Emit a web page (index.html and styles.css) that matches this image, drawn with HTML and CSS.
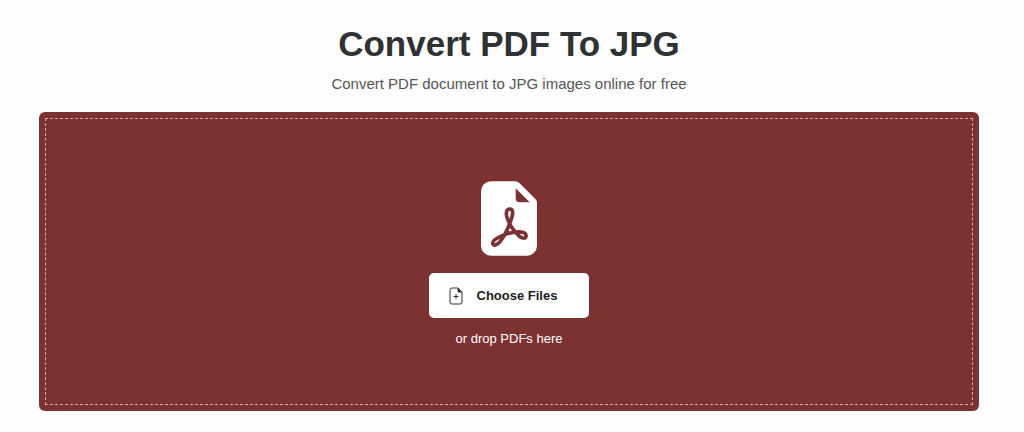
FILE: index.html
```html
<!DOCTYPE html>
<html lang="en">
<head>
  <meta charset="UTF-8" />
  <meta name="viewport" content="width=device-width, initial-scale=1.0" />
  <title>Convert PDF To JPG</title>
  <link rel="stylesheet" href="styles.css">
</head>
<body>
  <header class="header">
    <h1>Convert PDF To JPG</h1>
    <p>Convert PDF document to JPG images online for free</p>
  </header>

  <main class="uploader">
    <div class="drop-zone">
      <svg class="pdf-icon" viewBox="0 0 168 223" aria-hidden="true">
        <path fill="#fff" d="M30 0H103Q110 0 115 5L163 53Q168 58 168 65V193A30 30 0 0 1 138 223H30A30 30 0 0 1 0 193V30A30 30 0 0 1 30 0Z" />
        <path fill="#7d3232" d="M104 21L146 63H116Q104 63 104 51Z" />
        <path fill="none" stroke="#7d3232" stroke-width="11" stroke-linejoin="round" d="M86 83C75 83 74 98 79 111C84 128 98 148 113 163C123 173 136 174 135 162C134 149 103 149 76 158C55 166 34 176 35 185C36 196 48 192 58 180C73 162 88 126 93 106C97 92 95 83 86 83Z" />
      </svg>

      <button type="button" class="choose-btn">
        <svg class="file-icon" viewBox="0 0 14 18" aria-hidden="true">
          <path fill="none" stroke="#333" d="M3 1H9L13 5V15Q13 17 11 17H3Q1 17 1 15V3Q1 1 3 1ZM7 7V12M4.500 9.500H9.500" />
          <path fill="#222" d="M8.500 1L13 5.500H10Q8.500 5.500 8.500 4Z" />
        </svg>
        <span>Choose Files</span>
      </button>

      <p class="hint">or drop PDFs here</p>
    </div>
  </main>
</body>
</html>
```
FILE: styles.css
```css
body {
  font-family: "Liberation Sans", Arial, sans-serif;
  margin: 0;
  padding: 24px 45px 20px 39px;
  background: #fefefe;
}

.header {
  text-align: center;
  margin-bottom: 18px;
}

h1 {
  margin: 0 0 10px;
  font-size: 35px;
  line-height: 40px;
  color: #2f3233;
}

p {
  margin: 0;
}

.header p {
  font-size: 15px;
  line-height: 20px;
  color: #555;
}

.uploader {
  padding: 6px;
  background: #7d3232;
  border-radius: 6px;
}

.drop-zone {
  display: flex;
  flex-direction: column;
  align-items: center;
  padding: 62px 16px 55px;
  border: 1px dashed #d9aaa5;
}

.pdf-icon {
  width: 56px;
  height: 75px;
  margin-bottom: 17px;
}

.choose-btn {
  display: flex;
  align-items: center;
  gap: 14px;
  height: 45px;
  padding: 0 32px 0 20px;
  border: 0;
  border-radius: 5px;
  background: #fff;
  color: #222;
  font-family: inherit;
  font-size: 13px;
  font-weight: bold;
  cursor: pointer;
}

.file-icon {
  width: 14px;
  height: 18px;
}

.hint {
  margin-top: 11px;
  font-size: 13px;
  line-height: 20px;
  color: #fff;
}
```
